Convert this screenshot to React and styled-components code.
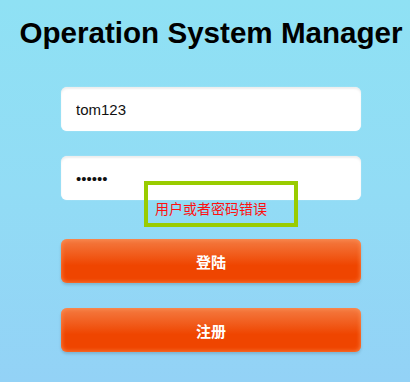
import React from 'react'
import styled, { createGlobalStyle } from 'styled-components'

const GlobalStyle = createGlobalStyle`
  html, body {
    margin: 0;
    padding: 0;
  }
  body {
    font-family: 'Liberation Sans', Arial, 'Noto Sans CJK SC', sans-serif;
    background: linear-gradient(to bottom, #8fe1f4 0%, #92dcf5 50%, #93d2f6 100%);
    min-height: 382px;
  }
`;

const Page = styled.div`
  min-height: 382px;
  padding-left: 12px;
  display: flex;
  flex-direction: column;
  align-items: center;
`;

const Title = styled.h1`
  margin: 16px 0 0;
  font-size: 29.6px;
  line-height: 34px;
  font-weight: bold;
  color: #000;
  white-space: nowrap;
`;

const Form = styled.form`
  width: 300px;
  margin-top: 37px;
  display: flex;
  flex-direction: column;
`;

const Field = styled.input`
  box-sizing: border-box;
  width: 300px;
  height: 44px;
  margin-bottom: ${(p) => p.$gap || 0}px;
  padding: 0 15px;
  border: none;
  border-radius: 6px;
  background: #fff;
  box-shadow: inset 0 2px 2px rgba(0, 0, 0, 0.07), 0 0 1px rgba(255, 255, 255, 0.8);
  font-family: 'Liberation Sans', Arial, sans-serif;
  font-size: 15px;
  color: #111;
  outline: none;
`;

const ErrorRow = styled.div`
  position: relative;
  height: 14px;
  margin-bottom: 25px;
  padding-left: 94px;
`;

const ErrorText = styled.span`
  font-family: 'Liberation Sans', 'Noto Sans CJK SC', sans-serif;
  font-size: 14px;
  line-height: 14px;
  color: #ff1010;
  white-space: nowrap;
`;

const Highlight = styled.div`
  position: absolute;
  left: 83px;
  top: -19px;
  width: 154px;
  height: 46px;
  box-sizing: border-box;
  border: 4px solid #99cc00;
  pointer-events: none;
`;

const Button = styled.button`
  width: 300px;
  height: 44px;
  margin-bottom: ${(p) => p.$gap || 0}px;
  border: none;
  border-radius: 6px;
  background: linear-gradient(to bottom, #f47b42 0%, #f15c1c 35%, #ef4500 60%, #ef4500 100%);
  box-shadow: inset 0 0 5px rgba(255, 150, 90, 0.9), 0 2px 3px rgba(0, 0, 0, 0.15);
  color: #fff;
  font-family: 'Liberation Sans', 'Noto Sans CJK SC', sans-serif;
  font-size: 15px;
  font-weight: bold;
  cursor: pointer;
`;

export default function App() {
  return (
    <>
      <GlobalStyle />
      <Page>
        <Title>Operation System Manager</Title>
        <Form onSubmit={(e) => e.preventDefault()}>
          <Field type="text" defaultValue="tom123" $gap={25} />
          <Field type="password" defaultValue="123456" />
          <ErrorRow>
            <ErrorText>用户或者密码错误</ErrorText>
            <Highlight />
          </ErrorRow>
          <Button type="submit" $gap={25}>登陆</Button>
          <Button type="button">注册</Button>
        </Form>
      </Page>
    </>
  )
}
